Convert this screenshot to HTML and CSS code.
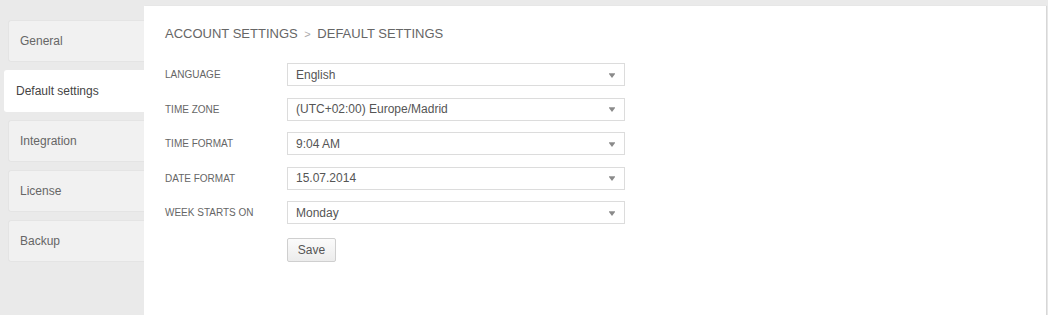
FILE: index.html
```html
<!DOCTYPE html>
<html>
<head>
<meta charset="utf-8">
<link rel="stylesheet" href="styles.css">
</head>
<body>
<div class="layout">
  <nav class="sidebar">
    <div class="tab">General</div>
    <div class="tab active">Default settings</div>
    <div class="tab">Integration</div>
    <div class="tab">License</div>
    <div class="tab">Backup</div>
  </nav>
  <main class="panel">
    <h1 class="crumbs">ACCOUNT SETTINGS <span class="sep">&gt;</span> DEFAULT SETTINGS</h1>
    <div class="form">
      <label class="lbl">LANGUAGE</label>
      <div class="select"><span>English</span><i class="arrow"></i></div>
      <label class="lbl">TIME ZONE</label>
      <div class="select"><span>(UTC+02:00) Europe/Madrid</span><i class="arrow"></i></div>
      <label class="lbl">TIME FORMAT</label>
      <div class="select"><span>9:04 AM</span><i class="arrow"></i></div>
      <label class="lbl">DATE FORMAT</label>
      <div class="select"><span>15.07.2014</span><i class="arrow"></i></div>
      <label class="lbl">WEEK STARTS ON</label>
      <div class="select"><span>Monday</span><i class="arrow"></i></div>
      <span></span>
      <div class="actions"><button class="btn">Save</button></div>
    </div>
  </main>
</div>
</body>
</html>
```
FILE: styles.css
```css
html, body {
  margin: 0;
  padding: 0;
}
body {
  background: #eaeaea;
  font-family: "Liberation Sans", Arial, sans-serif;
  color: #666;
  height: 315px;
  overflow: hidden;
}
.layout {
  display: flex;
  height: 315px;
}
.sidebar {
  width: 144px;
  flex: none;
  padding-top: 20px;
  display: flex;
  flex-direction: column;
  gap: 8px;
}
.tab {
  margin-left: 8px;
  height: 42px;
  box-sizing: border-box;
  background: #f1f1f1;
  border: 1px solid #e4e4e4;
  border-right: none;
  border-radius: 3px 0 0 3px;
  font-size: 12px;
  color: #666;
  display: flex;
  align-items: center;
  padding-left: 11px;
}
.tab.active {
  margin-left: 4px;
  background: #fff;
  border-color: #fff;
  color: #444;
  padding-left: 11px;
}
.panel {
  flex: 1;
  margin-top: 6px;
  margin-right: 2px;
  background: #fff;
  box-shadow: 1px 0 1px rgba(0,0,0,0.08);
  padding: 20px 0 0 21px;
}
.crumbs {
  margin: 0;
  font-size: 13px;
  font-weight: normal;
  line-height: 16px;
  color: #666;
}
.sep {
  color: #aaa;
  font-size: 11px;
  margin: 0 3px;
}
.form {
  margin-top: 21px;
  display: grid;
  grid-template-columns: 122px 338px;
  row-gap: 11.5px;
  align-items: center;
}
.lbl {
  font-size: 10px;
  color: #666;
}
.select {
  height: 23px;
  box-sizing: border-box;
  border: 1px solid #dcdcdc;
  display: flex;
  align-items: center;
  justify-content: space-between;
  padding: 0 9px 0 8px;
  font-size: 12px;
  color: #555;
}
.arrow {
  width: 0;
  height: 0;
  border-left: 3px solid transparent;
  border-right: 3px solid transparent;
  border-top: 4px solid #8a8a8a;
  position: relative;
  top: 1px;
}
.arrow::before {
  content: "";
  position: absolute;
  left: -3px;
  top: -5px;
  width: 6px;
  height: 1px;
  background: #aaa;
}
.actions {
  padding-top: 2.5px;
}
.btn {
  width: 49px;
  height: 24px;
  border: 1px solid #cfcfcf;
  border-radius: 2px;
  background: linear-gradient(#fbfbfb, #ececec);
  font-family: "Liberation Sans", Arial, sans-serif;
  font-size: 12px;
  color: #555;
  padding: 0;
}
```
